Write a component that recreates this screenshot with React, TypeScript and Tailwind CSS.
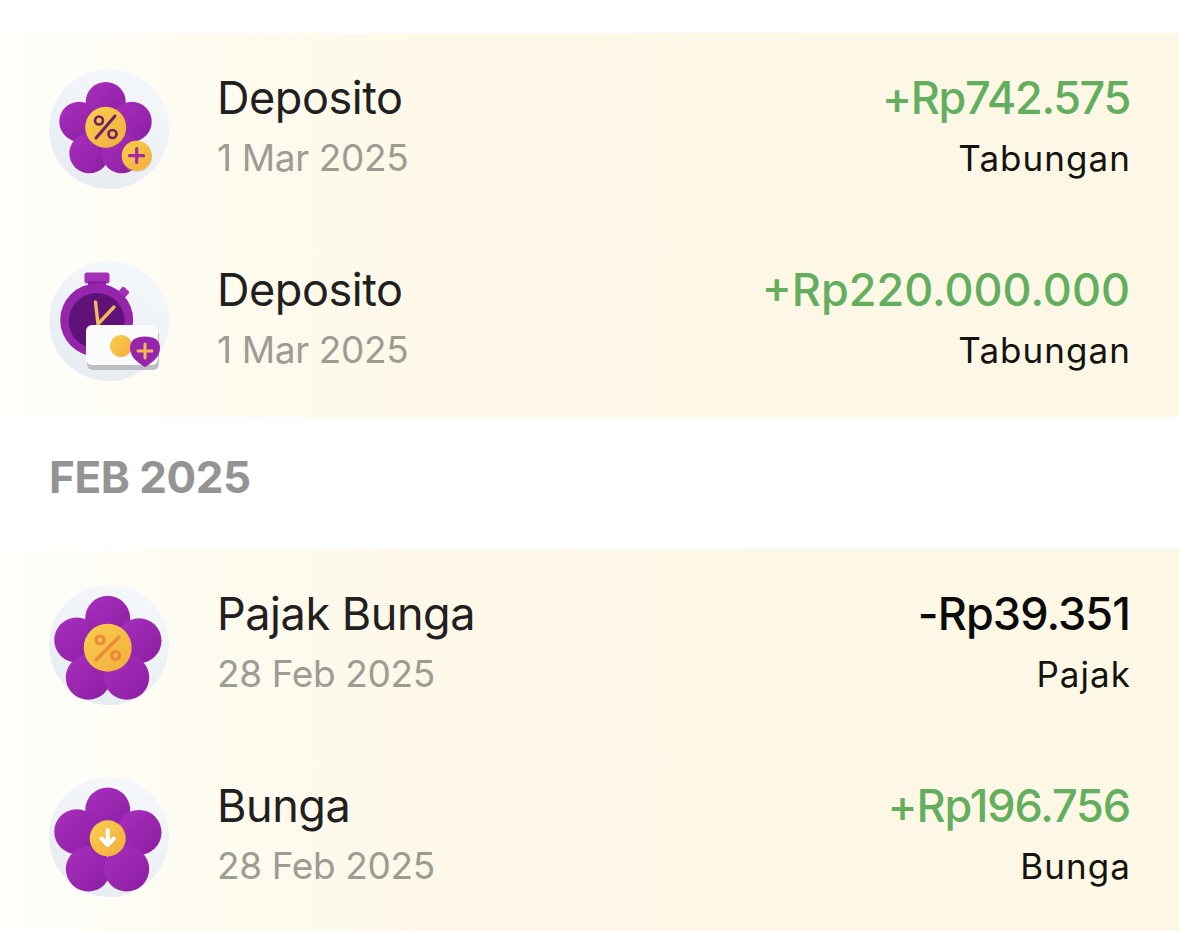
const FONT = "font-['Inter','Liberation_Sans',sans-serif]";
const BAND = "bg-[linear-gradient(90deg,#fffffc_0%,#fefbf0_17%,#fdf8e7_38%,#fdf8e5_100%)]";

function Defs({ id }: { id: string }) {
  return (
    <defs>
      <linearGradient id={`${id}-bg`} x1="0.7" y1="0" x2="0.3" y2="1">
        <stop offset="0" stopColor="#f5f8fb" />
        <stop offset="1" stopColor="#e6ecf1" />
      </linearGradient>
      <linearGradient id={`${id}-petal`} x1="0" y1="0" x2="1" y2="1">
        <stop offset="0" stopColor="#a92fbe" />
        <stop offset="1" stopColor="#8a1ea1" />
      </linearGradient>
      <linearGradient id={`${id}-gold`} x1="0" y1="0" x2="1" y2="1">
        <stop offset="0" stopColor="#f9cf4d" />
        <stop offset="1" stopColor="#f2ad3d" />
      </linearGradient>
    </defs>
  );
}

function Flower({ id, petals, r }: { id: string; petals: number[][]; r: number }) {
  return (
    <>
      {petals.map(([cx, cy], i) => (
        <circle key={i} cx={cx} cy={cy} r={r} fill={`url(#${id}-petal)`} />
      ))}
    </>
  );
}

const bigPetals = [
  [58.7, 33.3],
  [27.7, 55],
  [90, 55.7],
  [39.3, 92.3],
  [77.7, 92.3],
];

function IconDepositPercent() {
  const id = "a";
  return (
    <svg viewBox="0 0 120 120" className="w-[120px] h-[120px] shrink-0">
      <Defs id={id} />
      <circle cx="60" cy="60" r="60" fill={`url(#${id}-bg)`} />
      <Flower
        id={id}
        r={20}
        petals={[
          [56.7, 33],
          [30.3, 52.7],
          [82.7, 52.7],
          [40.3, 84.3],
          [72.7, 84.3],
        ]}
      />
      <circle cx="56.7" cy="58.3" r="20.5" fill={`url(#${id}-gold)`} />
      <circle cx="50" cy="51.5" r="4" fill="none" stroke="#6d1f6e" strokeWidth="2.6" />
      <circle cx="63.5" cy="65" r="4" fill="none" stroke="#6d1f6e" strokeWidth="2.6" />
      <path d="M66 47 47 69" stroke="#6d1f6e" strokeWidth="3" strokeLinecap="round" />
      <circle cx="88" cy="88" r="15" fill="#b9a15a" opacity="0.45" />
      <circle cx="87.7" cy="86.7" r="15" fill={`url(#${id}-gold)`} />
      <path d="M87.7 79.5v14M80.5 86.7h14" stroke="#a02aa8" strokeWidth="3.2" strokeLinecap="round" />
    </svg>
  );
}

function IconDepositTimer() {
  const id = "b";
  return (
    <svg viewBox="0 0 120 120" className="w-[120px] h-[120px] shrink-0">
      <Defs id={id} />
      <circle cx="60" cy="60" r="60" fill={`url(#${id}-bg)`} />
      <rect x="35.5" y="11.5" width="25" height="11" rx="2.5" fill="#a42fb8" />
      <rect x="39" y="20" width="18" height="6" fill="#8a1fa0" />
      <rect x="70" y="27" width="9" height="9" rx="1.5" transform="rotate(42 74.5 31.5)" fill="#a42fb8" />
      <circle cx="47.7" cy="59" r="36.5" fill="#9526ab" />
      <circle cx="47.7" cy="60" r="28" fill="#5f1378" />
      <path d="M46.5 41 49 63 65 46" fill="none" stroke="#f3b95a" strokeWidth="3.4" strokeLinecap="round" strokeLinejoin="round" />
      <rect x="38" y="68" width="72" height="41" rx="6" fill="#bdbfc4" />
      <rect x="37" y="64" width="72" height="40" rx="6" fill="#fbfbfc" />
      <circle cx="72" cy="85" r="11" fill={`url(#${id}-gold)`} />
      <path d="M81 87c0-8 6-11.500 15-11.500S111 79 111 87c0 9-8 15-15 19-7-4-15-10-15-19z" fill="#9526ab" />
      <path d="M96 83v14M89 90h14" stroke="#f5b750" strokeWidth="3" strokeLinecap="round" />
    </svg>
  );
}

function IconTax() {
  const id = "c";
  return (
    <svg viewBox="0 0 120 120" className="w-[120px] h-[120px] shrink-0">
      <Defs id={id} />
      <circle cx="60" cy="60" r="60" fill={`url(#${id}-bg)`} />
      <Flower id={id} r={22.5} petals={bigPetals} />
      <circle cx="58.7" cy="62.7" r="24" fill={`url(#${id}-gold)`} />
      <circle cx="51" cy="55" r="4" fill="none" stroke="#ec8a3a" strokeWidth="3.2" />
      <circle cx="66.500" cy="70.500" r="4" fill="none" stroke="#ec8a3a" strokeWidth="3.2" />
      <path d="M70 52 47 75" stroke="#ec8a3a" strokeWidth="3.4" strokeLinecap="round" />
    </svg>
  );
}

function IconInterest() {
  const id = "d";
  return (
    <svg viewBox="0 0 120 120" className="w-[120px] h-[120px] shrink-0">
      <Defs id={id} />
      <circle cx="60" cy="60" r="60" fill={`url(#${id}-bg)`} />
      <Flower id={id} r={22.5} petals={bigPetals.map(([x, y]) => [x, y - 0.3])} />
      <circle cx="58.7" cy="61.3" r="18" fill={`url(#${id}-gold)`} />
      <path d="M58.7 53v14M52.500 61.500l6.200 6.500 6.200-6.500" fill="none" stroke="#ffffff" strokeWidth="4" strokeLinecap="round" strokeLinejoin="round" />
    </svg>
  );
}

function Row({
  icon,
  title,
  date,
  amount,
  category,
  amountClass,
}: {
  icon: React.ReactNode;
  title: string;
  date: string;
  amount: string;
  category: string;
  amountClass: string;
}) {
  return (
    <div className="flex h-[192px] items-center justify-between pl-[49px] pr-[49px]">
      <div className="flex items-center gap-[48px]">
        {icon}
        <div className="flex flex-col gap-[19px] -mt-[5px]">
          <div className="text-[45px] leading-[44px] tracking-[-0.01em] text-[#22201e]">{title}</div>
          <div className="text-[37px] leading-[38px] tracking-[-0.01em] text-[#9d9c93]">{date}</div>
        </div>
      </div>
      <div className="flex flex-col items-end gap-[19px] -mt-[5px]">
        <div className={`text-[45px] leading-[44px] font-medium ${amountClass}`}>{amount}</div>
        <div className="text-[35px] leading-[38px] tracking-[0.03em] -mr-[1px] text-[#14130f]">{category}</div>
      </div>
    </div>
  );
}

export default function App() {
  return (
    <div className={`w-[1179px] h-[931px] overflow-hidden bg-white pt-[33px] ${FONT}`}>
      <div className={BAND}>
        <Row
          icon={<IconDepositPercent />}
          title="Deposito"
          date="1 Mar 2025"
          amount="+Rp742.575"
          category="Tabungan"
          amountClass="tracking-[-0.03em] text-[#63ae5f]"
        />
        <Row
          icon={<IconDepositTimer />}
          title="Deposito"
          date="1 Mar 2025"
          amount="+Rp220.000.000"
          category="Tabungan"
          amountClass="tracking-[0em] text-[#63ae5f]"
        />
      </div>
      <div className="flex h-[132px] items-center pl-[49px] pb-[13px] text-[44px] tracking-[-0.01em] font-bold text-[#949494]">FEB 2025</div>
      <div className={BAND}>
        <Row
          icon={<IconTax />}
          title="Pajak Bunga"
          date="28 Feb 2025"
          amount="-Rp39.351"
          category="Pajak"
          amountClass="tracking-[-0.02em] text-[#0b0b0a]"
        />
        <Row
          icon={<IconInterest />}
          title="Bunga"
          date="28 Feb 2025"
          amount="+Rp196.756"
          category="Bunga"
          amountClass="tracking-[-0.025em] text-[#63ae5f]"
        />
      </div>
    </div>
  );
}
